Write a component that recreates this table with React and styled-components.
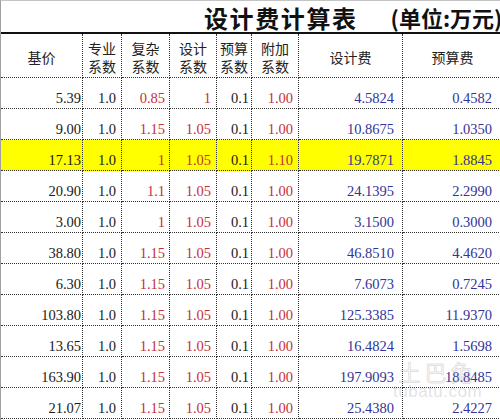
import styled, { createGlobalStyle } from 'styled-components';

const GlobalStyle = createGlobalStyle`
  html, body {
    margin: 0;
    padding: 0;
    background: #ffffff;
  }
`;

const Sheet = styled.div`
  position: relative;
  width: 500px;
  height: 420px;
  box-sizing: border-box;
  overflow: hidden;
  background: #ffffff;
  border-top: 1px solid #c4c4c4;
  border-left: 1px solid #a0a0a0;
`;

const TitleRow = styled.div`
  display: flex;
  align-items: flex-end;
  height: 31px;
  padding-left: 203px;
  border-bottom: 2px solid #111111;
  white-space: nowrap;
  font-family: "Noto Sans CJK SC", "Liberation Sans", sans-serif;
  font-weight: 700;
  color: #111111;
`;

const TitleMain = styled.span`
  font-size: 24px;
  letter-spacing: 1.6px;
  line-height: 29px;
`;

const TitleUnit = styled.span`
  margin-left: 33px;
  font-size: 22px;
  line-height: 29px;
`;

const Grid = styled.div`
  display: grid;
  grid-template-columns: 82px 39px 48px 47px 35px 47px 104px 100px;
  grid-auto-rows: 31px;
  grid-template-rows: 44px;
`;

const HeadCell = styled.div`
  display: flex;
  flex-direction: column;
  align-items: center;
  justify-content: center;
  box-sizing: border-box;
  padding-top: 2px;
  border-right: 1px dotted #333333;
  border-bottom: 1px dotted #333333;
  font-family: "Noto Sans CJK SC", "Liberation Sans", sans-serif;
  font-size: 14px;
  line-height: 18px;
  color: #222222;
`;

const Cell = styled.div`
  display: flex;
  align-items: flex-end;
  justify-content: flex-end;
  box-sizing: border-box;
  padding-right: ${(props) => props.$pad}px;
  padding-bottom: 2px;
  border-right: 1px dotted #333333;
  border-bottom: 1px dotted #333333;
  background: ${(props) => (props.$hl ? '#ffff00' : 'transparent')};
  font-family: "Liberation Serif", "Times New Roman", serif;
  font-size: 14.5px;
  line-height: 16px;
  color: ${(props) => props.$color};
`;

const Watermark = styled.div`
  position: absolute;
  left: 392px;
  top: 358px;
  display: flex;
  flex-direction: column;
  align-items: center;
  color: rgba(150, 150, 150, 0.28);
  font-family: "Liberation Sans", sans-serif;
  pointer-events: none;
`;

const WatermarkLogo = styled.span`
  font-family: "Noto Sans CJK SC", sans-serif;
  font-size: 22px;
  line-height: 24px;
  letter-spacing: 4px;
  color: transparent;
  -webkit-text-stroke: 1px rgba(150, 150, 150, 0.3);
`;

const WatermarkUrl = styled.span`
  font-size: 17px;
  line-height: 18px;
  letter-spacing: 0.5px;
`;

const headers = [['基价'], ['专业', '系数'], ['复杂', '系数'], ['设计', '系数'], ['预算', '系数'], ['附加', '系数'], ['设计费'], ['预算费']];

// per column: right padding and text colour
const BLACK = '#1a1a1a';
const RED = '#c62f3c';
const BLUE = '#333399';
const columns = [
  { pad: 1, color: BLACK },
  { pad: 5, color: BLACK },
  { pad: 4, color: RED },
  { pad: 5, color: RED },
  { pad: 2, color: BLACK },
  { pad: 5, color: RED },
  { pad: 8, color: BLUE },
  { pad: 10, color: BLUE },
];

const rows = [
  ['5.39', '1.0', '0.85', '1', '0.1', '1.00', '4.5824', '0.4582'],
  ['9.00', '1.0', '1.15', '1.05', '0.1', '1.00', '10.8675', '1.0350'],
  ['17.13', '1.0', '1', '1.05', '0.1', '1.10', '19.7871', '1.8845'],
  ['20.90', '1.0', '1.1', '1.05', '0.1', '1.00', '24.1395', '2.2990'],
  ['3.00', '1.0', '1', '1.05', '0.1', '1.00', '3.1500', '0.3000'],
  ['38.80', '1.0', '1.15', '1.05', '0.1', '1.00', '46.8510', '4.4620'],
  ['6.30', '1.0', '1.15', '1.05', '0.1', '1.00', '7.6073', '0.7245'],
  ['103.80', '1.0', '1.15', '1.05', '0.1', '1.00', '125.3385', '11.9370'],
  ['13.65', '1.0', '1.15', '1.05', '0.1', '1.00', '16.4824', '1.5698'],
  ['163.90', '1.0', '1.15', '1.05', '0.1', '1.00', '197.9093', '18.8485'],
  ['21.07', '1.0', '1.15', '1.05', '0.1', '1.00', '25.4380', '2.4227'],
];

const HIGHLIGHT_ROW = 2;

const App = () => {
  return (
    <>
      <GlobalStyle />
      <Sheet>
        <TitleRow>
          <TitleMain>设计费计算表</TitleMain>
          <TitleUnit>(单位:万元)</TitleUnit>
        </TitleRow>
        <Grid>
          {headers.map((lines, i) => (
            <HeadCell key={'h' + i}>
              {lines.map((line) => (
                <span key={line}>{line}</span>
              ))}
            </HeadCell>
          ))}
          {rows.map((row, r) =>
            row.map((value, c) => (
              <Cell
                key={r + '-' + c}
                $pad={columns[c].pad}
                $color={columns[c].color}
                $hl={r === HIGHLIGHT_ROW}
              >
                {value}
              </Cell>
            ))
          )}
        </Grid>
        <Watermark>
          <WatermarkLogo>土巴兔</WatermarkLogo>
          <WatermarkUrl>tubatu.com</WatermarkUrl>
        </Watermark>
      </Sheet>
    </>
  );
};

export default App;
